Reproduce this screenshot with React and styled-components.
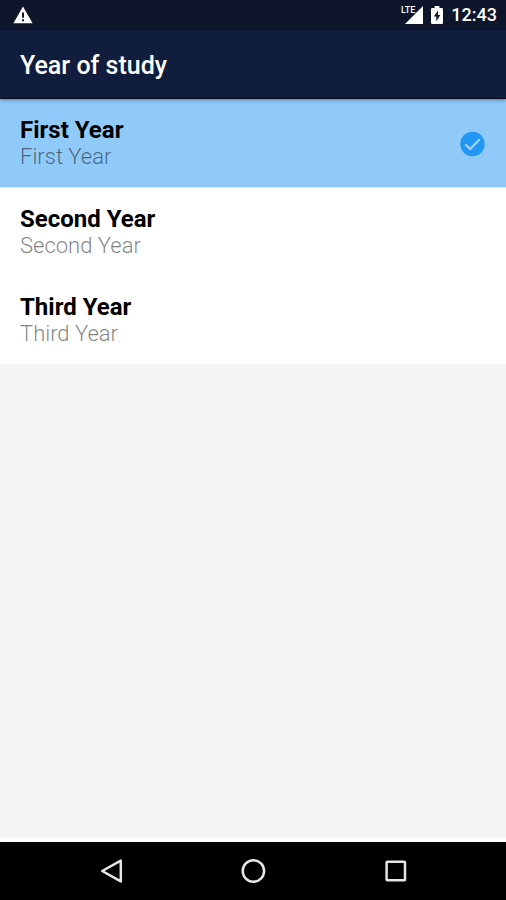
import React, { useState } from "react";
import styled, { createGlobalStyle } from "styled-components";

const years = [
  { id: "first", title: "First Year", subtitle: "First Year" },
  { id: "second", title: "Second Year", subtitle: "Second Year" },
  { id: "third", title: "Third Year", subtitle: "Third Year" },
];

function StatusBar() {
  return (
    <StatusBarStyled>
      <svg className="warning" width="20" height="18" viewBox="0 0 20 18">
        <path d="M10 0.5 L19.6 17.3 H0.4 Z" fill="#fff" />
        <path d="M9 6.6 H11 V11.8 H9 Z M9 13.2 H11 V15.3 H9 Z" fill="#0d162b" />
      </svg>
      <div className="status-icons">
        <div className="signal">
          <span>LTE</span>
          <svg width="18" height="18" viewBox="0 0 18 18">
            <path d="M18 0 V18 H0 Z" fill="#fff" />
          </svg>
        </div>
        <svg width="12" height="18" viewBox="0 0 12 18">
          <path
            d="M3.6 0 H8.4 V2 H10.8 Q12 2 12 3.2 V16.8 Q12 18 10.8 18 H1.2 Q0 18 0 16.8 V3.2 Q0 2 1.2 2 H3.6 Z"
            fill="#fff"
          />
          <path d="M7 4.6 L2.8 10.6 H5.3 V15.4 L9.3 9 H7 Z" fill="#0d162b" />
        </svg>
        <time>12:43</time>
      </div>
    </StatusBarStyled>
  );
}

function YearOption({ year, selected, onSelect }) {
  return (
    <Option $selected={selected}>
      <input
        type="radio"
        name="year"
        value={year.id}
        checked={selected}
        onChange={() => onSelect(year.id)}
      />
      <span className="text">
        <strong>{year.title}</strong>
        <span>{year.subtitle}</span>
      </span>
      {selected && (
        <svg width="26" height="26" viewBox="0 0 26 26">
          <circle cx="12.5" cy="13" r="12.2" fill="#2196f3" />
          <path
            d="M5.4 13.4 L10.2 18 L19.8 8.2"
            fill="none"
            stroke="#a4d3fa"
            strokeWidth="2.3"
          />
        </svg>
      )}
    </Option>
  );
}

function NavigationBar() {
  return (
    <NavigationBarStyled>
      <button type="button" aria-label="Back">
        <svg width="26" height="26" viewBox="0 0 26 26">
          <path d="M22.8 2.6 V23.4 L4.2 13 Z" />
        </svg>
      </button>
      <button type="button" aria-label="Home">
        <svg width="26" height="26" viewBox="0 0 26 26">
          <circle cx="13.4" cy="13" r="10.7" />
        </svg>
      </button>
      <button type="button" aria-label="Recent apps">
        <svg width="26" height="26" viewBox="0 0 26 26">
          <rect x="4.6" y="3.8" width="18.4" height="18.4" rx="0.8" />
        </svg>
      </button>
    </NavigationBarStyled>
  );
}

function App() {
  const [selectedYear, setSelectedYear] = useState("first");

  return (
    <Screen>
      <GlobalStyle />
      <StatusBar />
      <AppBar>
        <h1>Year of study</h1>
      </AppBar>
      <YearList aria-label="Year of study">
        {years.map((year) => (
          <YearOption
            key={year.id}
            year={year}
            selected={year.id === selectedYear}
            onSelect={setSelectedYear}
          />
        ))}
      </YearList>
      <NavigationBar />
    </Screen>
  );
}

const GlobalStyle = createGlobalStyle`
  * {
    box-sizing: border-box;
  }
  body {
    margin: 0;
    font-family: Roboto, "Liberation Sans", sans-serif;
  }
`;

const Screen = styled.div`
  min-height: 100vh;
  display: flex;
  flex-direction: column;
  background: #f5f5f5;
`;

const StatusBarStyled = styled.div`
  height: 30px;
  padding: 0 9px 0 13px;
  display: flex;
  align-items: center;
  justify-content: space-between;
  background: #0d162b;
  color: #ffffff;
  .status-icons {
    display: flex;
    align-items: center;
    gap: 8px;
  }
  .signal {
    display: flex;
    position: relative;
    span {
      position: absolute;
      right: 8px;
      top: 0;
      font-size: 9px;
      font-weight: 500;
      line-height: 9px;
    }
  }
  time {
    font-size: 18px;
    font-weight: 500;
    line-height: 24px;
  }
`;

const AppBar = styled.header`
  padding: 22px 20px 18px;
  background: #111d3d;
  border-bottom: 1px solid #070d1d;
  box-shadow: 0 1px 4px rgba(0, 0, 0, 0.4);
  z-index: 1;
  h1 {
    margin: 0;
    color: #ffffff;
    font-size: 25px;
    font-weight: 500;
    line-height: 28px;
  }
`;

const YearList = styled.fieldset`
  flex: 1;
  min-width: 0;
  margin: 0;
  padding: 0;
  border: 0;
`;

const Option = styled.label`
  padding: 18px 20px 17px;
  display: flex;
  align-items: center;
  justify-content: space-between;
  background: ${({ $selected }) => ($selected ? "#90caf9" : "#ffffff")};
  border-bottom: ${({ $selected }) => ($selected ? "1px solid #d3eafd" : "0")};
  cursor: pointer;
  input {
    appearance: none;
    position: absolute;
    margin: 0;
  }
  .text {
    display: flex;
    flex-direction: column;
    gap: 1px;
    line-height: 26px;
  }
  strong {
    color: #000000;
    font-size: 24px;
    font-weight: 700;
  }
  .text span {
    color: rgba(0, 0, 0, 0.5);
    font-size: 22px;
    font-weight: 300;
  }
`;

const NavigationBarStyled = styled.nav`
  height: 62px;
  display: grid;
  grid-template-columns: repeat(3, 28%);
  justify-content: center;
  background: #000000;
  border-top: 4px solid #ffffff;
  button {
    padding: 0;
    display: flex;
    align-items: center;
    justify-content: center;
    background: none;
    border: 0;
    cursor: pointer;
  }
  svg {
    fill: none;
    stroke: #e6e6e6;
    stroke-width: 2.5;
    stroke-linejoin: round;
  }
`;

export default App;
